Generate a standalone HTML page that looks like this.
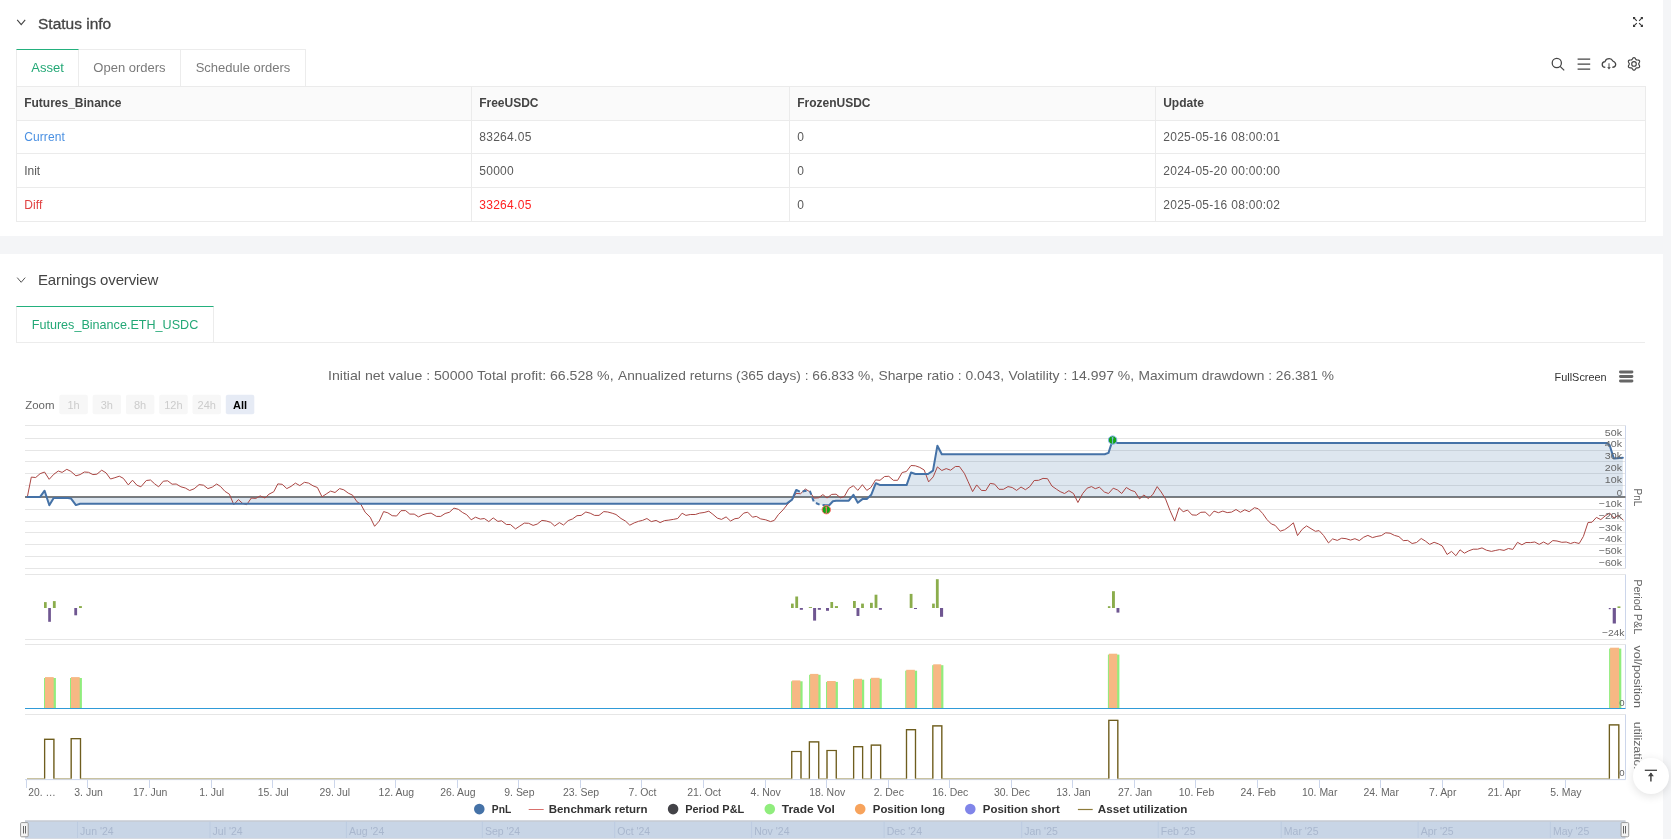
<!DOCTYPE html>
<html><head><meta charset="utf-8"><title>Backtest</title>
<style>
html,body{margin:0;padding:0}
body{width:1671px;height:839px;overflow:hidden;background:#f4f5f7;position:relative;font-family:'Liberation Sans',sans-serif;color:#595959}
.card{position:absolute;left:0;width:1663px;background:#fff}
.abs{position:absolute;white-space:nowrap;line-height:1}
.h1{font-size:15.5px;color:#444;-webkit-text-stroke:.3px #444}
.h2{font-size:15px;color:#444;letter-spacing:-.14px}
.tabs{position:absolute;left:16px;top:49px;height:37px;display:flex}
.tab{box-sizing:border-box;height:37px;border:1px solid #ececec;border-left:none;border-bottom:none;font-size:13px;color:#7a7a7a;line-height:35px;text-align:center}
.tab.first{border-left:1px solid #ececec}
.tab.on{border-top:1px solid #23b07d;color:#23a876;background:#fff}
table{position:absolute;left:16px;top:86px;width:1628.5px;border-collapse:collapse;table-layout:fixed;font-size:12px}
td,th{border:1px solid #ebebeb;padding:0 0 0 7.2px;text-align:left;height:33px;box-sizing:border-box;font-weight:400;color:#595959;white-space:nowrap}
th{background:#fafafa;font-weight:700;color:#444;height:34px;padding-bottom:2px}
tr.r1 td{height:33px}tr.r2 td{height:34px;padding-top:1px}tr.r3 td{height:34px;padding-top:1px}
td.n{letter-spacing:.3px}
svg text{font-family:'Liberation Sans',sans-serif}
.ax{font-size:9.6px;fill:#666}
.at{font-size:10.5px;fill:#666}
.xl{font-size:10px;fill:#666}
.lg{font-size:11.5px;font-weight:700;fill:#333}
.nv{font-size:10px;fill:#a9b7ce}
.tt{font-size:13px;fill:#666}
.zm{font-size:11.5px;fill:#666}
.zb{font-size:11px;fill:#ccc}
.zb.on{font-weight:700;fill:#000}
.fs{font-size:11px;fill:#333}
#gl{position:absolute;left:0;top:0;width:1671px;height:839px;will-change:transform}
</style></head><body>
<div class="card" style="top:0;height:236px"></div>
<div class="card" style="top:253.6px;height:585.4px"></div>

<div id="gl">
<svg class="abs" style="left:16px;top:18px" width="11" height="9" viewBox="0 0 11 9"><path d="M1.2 1.9L5.2 6.6L9.2 1.9" fill="none" stroke="#444" stroke-width="1.1"/></svg>
<div class="abs h1" style="left:38px;top:15.5px">Status info</div>
<svg class="abs" style="left:1632px;top:16px" width="12" height="12" viewBox="0 0 12 12"><g stroke="#333" stroke-width="1.1" fill="none"><path d="M4.8 4.8L1.7 1.7M7.1 4.8L10.2 1.7M4.8 7.1L1.7 10.2M7.1 7.1L10.2 10.2"/></g><g fill="#333"><path d="M1 1H3.6L1 3.6ZM10.9 1H8.3L10.9 3.6ZM1 10.9H3.6L1 8.3ZM10.9 10.9H8.3L10.9 8.3Z"/></g></svg>

<div class="tabs"><div class="tab first on" style="width:63px">Asset</div><div class="tab" style="width:102px">Open orders</div><div class="tab" style="width:125px">Schedule orders</div></div>

<svg class="abs" style="left:1548px;top:54px" width="98" height="20" viewBox="1548 54 98 20" fill="none" stroke="#444" stroke-width="1.25">
<circle cx="1556.8" cy="63" r="4.6"/><path d="M1560.1 66.4L1564.2 70.4"/>
<path d="M1577.6 59H1590.2M1577.6 64H1590.2M1577.6 69H1590.2"/>
<path d="M1605.3 67.4C1603.4 67.2 1602.2 65.9 1602.2 64.4C1602.2 62.9 1603.4 61.8 1605 61.6C1605.6 59.8 1607.3 58.7 1609.3 58.7C1611 58.7 1612.2 59.6 1612.8 61C1614.5 61.7 1615.7 62.8 1615.7 64.4C1615.7 66 1614.3 67.1 1612.3 67.4"/><path d="M1609 63.2V68" stroke="#888" stroke-width="1.5"/><path d="M1607.2 67.2H1610.8L1609 69.5Z" fill="#444" stroke="none"/>
<circle cx="1634" cy="63.9" r="2.3" stroke-width="1.1"/>
<path d="M1634.00 57.60 L1634.54 57.73 L1635.02 58.09 L1635.42 58.59 L1635.74 59.11 L1636.03 59.54 L1636.35 59.83 L1636.76 59.96 L1637.28 59.99 L1637.89 60.01 L1638.52 60.11 L1639.07 60.35 L1639.46 60.75 L1639.61 61.28 L1639.54 61.88 L1639.31 62.48 L1639.02 63.01 L1638.79 63.48 L1638.70 63.90 L1638.79 64.32 L1639.02 64.79 L1639.31 65.32 L1639.54 65.92 L1639.61 66.52 L1639.46 67.05 L1639.07 67.45 L1638.52 67.69 L1637.89 67.79 L1637.28 67.81 L1636.76 67.84 L1636.35 67.97 L1636.03 68.26 L1635.74 68.69 L1635.42 69.21 L1635.02 69.71 L1634.54 70.07 L1634.00 70.20 L1633.46 70.07 L1632.98 69.71 L1632.58 69.21 L1632.26 68.69 L1631.97 68.26 L1631.65 67.97 L1631.24 67.84 L1630.72 67.81 L1630.11 67.79 L1629.48 67.69 L1628.93 67.45 L1628.54 67.05 L1628.39 66.52 L1628.46 65.92 L1628.69 65.32 L1628.98 64.79 L1629.21 64.32 L1629.30 63.90 L1629.21 63.48 L1628.98 63.01 L1628.69 62.48 L1628.46 61.88 L1628.39 61.28 L1628.54 60.75 L1628.93 60.35 L1629.48 60.11 L1630.11 60.01 L1630.72 59.99 L1631.24 59.96 L1631.65 59.83 L1631.97 59.54 L1632.26 59.11 L1632.58 58.59 L1632.98 58.09 L1633.46 57.73Z" stroke-linejoin="round" stroke-width="1.2"/>
</svg>

<table><colgroup><col style="width:455px"><col style="width:318px"><col style="width:366px"><col style="width:489.5px"></colgroup>
<tr><th>Futures_Binance</th><th>FreeUSDC</th><th>FrozenUSDC</th><th>Update</th></tr>
<tr class="r1"><td style="color:#4a90e2;letter-spacing:.1px">Current</td><td class="n">83264.05</td><td class="n">0</td><td class="n">2025-05-16 08:00:01</td></tr>
<tr class="r2"><td>Init</td><td class="n">50000</td><td class="n">0</td><td class="n">2024-05-20 00:00:00</td></tr>
<tr class="r3"><td style="color:#e04040;letter-spacing:.15px">Diff</td><td class="n" style="color:#ff1f1f">33264.05</td><td class="n">0</td><td class="n">2025-05-16 08:00:02</td></tr>
</table>

<svg class="abs" style="left:16px;top:276px" width="11" height="9" viewBox="0 0 11 9"><path d="M1.2 1.6L5.2 6.3L9.2 1.6" fill="none" stroke="#555" stroke-width="1"/></svg>
<div class="abs h2" style="left:38px;top:271.5px">Earnings overview</div>
<div class="abs" style="left:16px;top:306px;width:198px;height:37px;box-sizing:border-box;border:1px solid #ececec;border-top:1px solid #23b07d;border-bottom:none;font-size:12.6px;color:#23a876;line-height:37px;text-align:center">Futures_Binance.ETH_USDC</div>
<div class="abs" style="left:16px;top:342px;width:1629px;height:1px;background:#ececec"></div>

<svg class="abs" style="left:0;top:0" width="1671" height="839" viewBox="0 0 1671 839">
<path d="M25 568.5H1625.5" stroke="#e6e6e6" stroke-width="1"/>
<path d="M25 556.5H1625.5" stroke="#e6e6e6" stroke-width="1"/>
<path d="M25 544.5H1625.5" stroke="#e6e6e6" stroke-width="1"/>
<path d="M25 532.5H1625.5" stroke="#e6e6e6" stroke-width="1"/>
<path d="M25 521.5H1625.5" stroke="#e6e6e6" stroke-width="1"/>
<path d="M25 509.5H1625.5" stroke="#e6e6e6" stroke-width="1"/>
<path d="M25 485.5H1625.5" stroke="#e6e6e6" stroke-width="1"/>
<path d="M25 473.5H1625.5" stroke="#e6e6e6" stroke-width="1"/>
<path d="M25 461.5H1625.5" stroke="#e6e6e6" stroke-width="1"/>
<path d="M25 450.5H1625.5" stroke="#e6e6e6" stroke-width="1"/>
<path d="M25 438.5H1625.5" stroke="#e6e6e6" stroke-width="1"/>
<path d="M25 425.5H1625.5" stroke="#e6e6e6" stroke-width="1"/>
<path d="M25 574.5H1625.5" stroke="#e6e6e6" stroke-width="1"/>
<path d="M25 639.5H1625.5" stroke="#e6e6e6" stroke-width="1"/>
<path d="M25 644.5H1625.5" stroke="#e6e6e6" stroke-width="1"/>
<path d="M25 714.5H1625.5" stroke="#e6e6e6" stroke-width="1"/>
<path d="M1625.5 425.5V568.5" stroke="#ccd6eb" stroke-width="1"/>
<path d="M1625.5 574.5V639.5" stroke="#ccd6eb" stroke-width="1"/>
<path d="M1625.5 644.5V708.5" stroke="#ccd6eb" stroke-width="1"/>
<path d="M1625.5 714.5V779.5" stroke="#ccd6eb" stroke-width="1"/>
<path d="M25 497H1625.5" stroke="#7d7d7d" stroke-width="2"/>
<path d="M27.4 497 L27.4,496.9 40.1,496.9 44.6,490.7 49.3,505.3 53.7,497.9 67.8,497.9 70.9,498.4 75.9,505.1 80.1,503.7 786.4,503.7 792.1,499.6 796.2,490.0 800.9,492.1 805.3,490.8 810.1,491.5 812.8,499.0 814.1,502.2 819.7,504.7 824.8,505.3 829.2,505.3 832.9,501.3 836.1,500.7 848.8,500.7 853.4,494.8 857.8,502.7 862.4,499.1 866.8,499.1 871.2,494.8 875.8,483.2 880.2,485.1 906.6,485.1 911.0,472.5 915.4,474.0 928.0,474.0 933.0,470.6 937.4,445.7 941.8,454.3 1104.7,454.3 1108.5,452.9 1111.0,445.1 1112.9,441.1 1117.3,442.9 1606.3,442.9 1609.5,444.8 1613.8,458.4 1622.8,457.7 L1622.8 497 Z" fill="#4572A7" fill-opacity="0.18"/>
<polyline points="27.3,497.2 31.3,477.1 35.7,477.5 40.1,473.7 44.5,472.0 49.2,479.3 53.9,474.2 58.3,471.0 62.1,472.4 66.8,469.3 70.9,471.4 75.9,475.8 80.1,474.6 84.3,472.0 88.5,472.3 92.9,474.6 96.9,474.2 101.7,470.2 106.1,472.9 110.5,479.0 114.9,477.7 119.3,476.2 123.3,478.3 128.3,484.9 132.5,480.2 136.9,485.2 140.9,486.8 146.3,480.5 150.5,480.0 154.5,483.7 158.6,486.8 163.3,481.2 167.7,480.8 172.1,484.2 176.2,484.0 180.9,486.8 185.3,488.0 189.7,490.5 194.1,488.8 199.1,484.6 203.5,485.2 207.9,488.6 212.3,487.1 216.7,484.0 220.5,486.5 224.9,491.3 229.4,494.2 233.8,504.7 238.4,499.6 242.6,503.4 246.6,504.7 251.4,498.0 255.8,498.4 260.2,495.9 265.0,498.0 269.0,494.2 273.8,491.7 277.8,483.9 282.2,484.3 286.8,488.6 291.0,486.4 295.4,483.1 299.8,485.6 304.4,482.3 308.6,483.1 313.0,485.8 317.4,487.5 322.0,496.8 326.2,494.0 330.6,491.1 335.0,492.5 339.6,488.6 343.8,489.8 348.2,493.1 352.6,495.2 357.0,501.8 360.7,504.0 365.1,512.2 370.2,517.2 374.6,526.3 379.3,521.0 383.6,511.6 387.8,512.8 392.2,515.7 396.6,516.0 401.0,510.7 405.6,510.6 409.8,514.1 414.2,514.1 418.5,516.9 422.9,514.7 427.1,513.5 431.1,513.1 436.5,516.4 440.7,516.4 445.1,513.5 449.5,512.2 453.9,508.1 458.3,509.3 462.7,512.6 466.7,514.7 471.2,519.8 475.5,517.2 480.3,519.1 484.3,518.5 488.8,521.6 493.2,517.9 497.9,521.4 501.6,520.8 506.4,524.5 510.4,524.5 515.5,528.9 519.9,526.0 524.3,523.1 528.7,523.3 533.1,525.4 537.2,524.1 541.9,520.4 546.3,521.0 550.6,522.3 554.7,526.0 559.4,522.6 563.5,525.0 568.2,520.6 572.6,518.9 577.0,515.7 581.2,515.4 585.8,512.0 590.2,513.2 594.6,515.4 599.0,515.4 603.8,511.6 607.8,512.0 612.2,513.2 616.0,514.5 621.0,518.5 625.4,521.0 629.8,525.2 634.2,522.9 638.6,521.3 642.5,520.4 646.9,518.5 651.3,521.6 656.1,520.4 660.1,522.6 664.5,520.6 668.9,520.1 673.3,519.4 677.7,518.5 682.1,513.2 685.9,515.4 690.3,514.5 695.3,514.5 699.7,513.1 704.1,512.5 708.8,511.2 712.9,514.3 717.3,518.1 721.5,519.4 726.1,516.9 730.5,521.0 734.9,518.7 738.7,518.2 743.7,513.1 747.7,512.2 752.5,517.2 756.3,516.4 760.7,518.9 765.7,519.8 770.5,521.6 774.3,520.4 778.3,514.7 783.0,509.9 787.7,504.0 792.1,500.0 795.9,493.4 800.6,493.7 805.3,489.0 809.7,491.7 814.1,498.1 818.5,497.8 822.9,494.6 827.0,498.0 831.7,494.4 836.1,494.2 840.5,497.8 844.4,496.4 848.8,488.5 853.4,485.7 857.8,490.4 862.4,484.7 866.8,490.4 870.8,487.6 875.6,479.9 880.0,480.3 884.6,476.5 888.8,476.3 893.4,480.3 897.6,480.3 902.2,472.5 906.4,471.5 911.0,465.5 915.4,465.8 919.8,467.4 924.2,470.0 928.6,481.9 933.2,476.9 937.4,466.9 941.8,470.5 946.2,468.6 950.6,470.2 955.4,466.5 959.4,466.5 964.4,473.4 968.2,481.8 972.6,491.6 976.7,484.9 981.4,490.4 985.8,490.6 990.2,483.4 994.6,484.1 999.0,489.3 1003.4,489.3 1008.0,486.6 1012.2,487.5 1016.6,490.4 1021.0,487.0 1025.4,489.7 1029.8,486.6 1034.2,480.5 1038.6,480.3 1043.0,478.4 1047.5,478.7 1051.9,486.0 1056.3,489.1 1060.1,491.6 1064.5,493.5 1068.9,490.7 1073.5,493.5 1077.9,502.5 1082.7,493.5 1087.1,488.2 1091.5,486.6 1095.3,488.7 1099.4,487.2 1104.4,492.0 1108.5,493.5 1113.2,488.2 1117.6,490.0 1121.7,493.5 1126.3,487.5 1131.1,490.4 1134.9,491.6 1139.5,498.9 1143.9,495.0 1148.3,498.5 1152.8,494.5 1157.2,486.6 1161.2,492.0 1165.6,499.1 1170.0,510.5 1174.7,521.1 1179.1,507.7 1183.2,511.7 1187.6,510.1 1192.0,514.9 1196.4,515.2 1200.8,512.3 1205.2,512.1 1209.6,516.1 1214.0,511.1 1218.4,512.7 1222.8,511.1 1227.2,512.6 1231.6,512.1 1236.0,509.5 1240.4,512.3 1244.8,509.8 1249.2,511.7 1254.4,507.7 1258.2,508.7 1262.6,513.4 1267.0,519.6 1271.4,524.0 1275.1,525.3 1280.2,531.2 1284.6,529.7 1289.0,526.6 1293.4,522.8 1297.5,535.6 1302.2,529.3 1306.6,525.9 1311.0,528.7 1315.4,531.3 1319.1,530.6 1323.5,535.4 1328.5,542.9 1332.6,538.9 1337.3,540.4 1341.7,538.2 1346.1,538.7 1350.5,540.1 1354.9,538.7 1359.3,540.6 1363.7,537.2 1367.9,535.4 1372.5,537.6 1376.9,536.4 1381.3,535.6 1385.7,532.8 1390.1,533.2 1394.5,535.4 1398.9,536.6 1403.3,540.6 1407.7,540.4 1412.1,543.5 1416.5,542.5 1421.2,538.5 1425.3,541.0 1429.7,544.4 1434.1,542.3 1438.5,543.9 1442.3,546.0 1447.1,554.5 1451.5,551.4 1455.9,555.7 1460.0,549.8 1464.4,553.2 1468.8,550.8 1473.2,549.2 1477.6,549.2 1482.0,547.9 1486.4,550.2 1491.4,551.4 1495.8,550.4 1499.6,549.6 1504.0,550.4 1508.4,548.5 1512.8,549.4 1517.5,542.3 1521.9,544.8 1526.0,542.5 1530.4,542.6 1534.8,542.0 1539.2,544.4 1543.6,542.0 1548.0,544.4 1552.8,540.6 1557.0,541.0 1561.8,542.3 1566.2,542.0 1570.6,543.5 1574.4,542.3 1579.2,543.5 1583.4,536.4 1588.0,522.5 1592.0,522.2 1596.4,517.4 1600.8,519.6 1605.2,515.9 1609.6,513.1 1614.0,518.0 1618.4,515.2 1623.4,520.3" fill="none" stroke="#AA4643" stroke-width="1" stroke-linejoin="round"/>
<polyline points="27.4,496.9 40.1,496.9 44.6,490.7 49.3,505.3 53.7,497.9 67.8,497.9 70.9,498.4 75.9,505.1 80.1,503.7 786.4,503.7 792.1,499.6 796.2,490.0" fill="none" stroke="#4572A7" stroke-width="2" stroke-linejoin="round" stroke-linecap="round"/>
<polyline points="796.2,490.0 800.9,492.1 805.3,490.8 810.1,491.5 812.8,499.0 814.1,502.2 819.7,504.7 824.8,505.3" fill="none" stroke="#4572A7" stroke-width="2" stroke-dasharray="4 3" stroke-linejoin="round"/>
<polyline points="824.8,505.3 829.2,505.3 832.9,501.3 836.1,500.7 848.8,500.7 853.4,494.8 857.8,502.7 862.4,499.1 866.8,499.1 871.2,494.8 875.8,483.2 880.2,485.1 906.6,485.1 911.0,472.5 915.4,474.0 928.0,474.0 933.0,470.6 937.4,445.7 941.8,454.3 1104.7,454.3 1108.5,452.9 1111.0,445.1 1112.9,441.1 1117.3,442.9 1606.3,442.9 1609.5,444.8 1613.8,458.4 1622.8,457.7" fill="none" stroke="#4572A7" stroke-width="2" stroke-linejoin="round" stroke-linecap="round"/>
<circle cx="826.3" cy="509.7" r="4.2" fill="#14a514" stroke="#ff7070" stroke-width="1"/>
<path d="M826.3 507.5V513.3" stroke="#ff7070" stroke-width="1"/><circle cx="826.3" cy="507.5" r="0.9" fill="#ff7070"/>
<circle cx="1112.6" cy="440.1" r="4.2" fill="#14a514" stroke="#7fb0e8" stroke-width="1"/>
<path d="M1112.6 437.90000000000003V443.70000000000005" stroke="#7fb0e8" stroke-width="1"/><circle cx="1112.6" cy="437.90000000000003" r="0.9" fill="#7fb0e8"/>
<rect x="44.0" y="602.1" width="2.7" height="5.9" fill="#8bad4c"/>
<rect x="48.2" y="608.0" width="2.7" height="13.8" fill="#6f5691"/>
<rect x="52.9" y="601.1" width="2.8" height="6.9" fill="#8bad4c"/>
<rect x="74.3" y="608.0" width="2.8" height="7.3" fill="#6f5691"/>
<rect x="79.0" y="606.1" width="2.9" height="1.9" fill="#8bad4c"/>
<rect x="791.0" y="603.6" width="2.7" height="4.4" fill="#8bad4c"/>
<rect x="795.3" y="596.5" width="2.8" height="11.5" fill="#8bad4c"/>
<rect x="799.8" y="608.0" width="3.1" height="1.8" fill="#6f5691"/>
<rect x="808.8" y="607.1" width="3.2" height="0.9" fill="#8bad4c"/>
<rect x="813.1" y="608.0" width="3.0" height="12.6" fill="#6f5691"/>
<rect x="817.8" y="608.0" width="3.1" height="1.8" fill="#6f5691"/>
<rect x="826.0" y="608.0" width="3.0" height="2.8" fill="#6f5691"/>
<rect x="830.4" y="602.0" width="2.7" height="6.0" fill="#8bad4c"/>
<rect x="834.9" y="606.1" width="3.1" height="1.9" fill="#8bad4c"/>
<rect x="853.0" y="601.0" width="2.8" height="7.0" fill="#8bad4c"/>
<rect x="856.5" y="608.0" width="2.9" height="8.0" fill="#6f5691"/>
<rect x="861.1" y="603.6" width="2.8" height="4.4" fill="#8bad4c"/>
<rect x="870.0" y="602.8" width="2.8" height="5.2" fill="#8bad4c"/>
<rect x="874.6" y="594.7" width="2.8" height="13.2" fill="#8bad4c"/>
<rect x="878.9" y="608.0" width="3.0" height="1.8" fill="#6f5691"/>
<rect x="909.7" y="593.9" width="2.8" height="14.1" fill="#8bad4c"/>
<rect x="914.0" y="608.0" width="3.0" height="1.0" fill="#6f5691"/>
<rect x="932.1" y="603.6" width="2.7" height="4.4" fill="#8bad4c"/>
<rect x="935.9" y="579.2" width="2.8" height="28.8" fill="#8bad4c"/>
<rect x="940.0" y="608.0" width="3.1" height="8.8" fill="#6f5691"/>
<rect x="1107.9" y="606.2" width="2.5" height="1.8" fill="#8bad4c"/>
<rect x="1112.0" y="591.2" width="2.9" height="16.8" fill="#8bad4c"/>
<rect x="1116.5" y="608.0" width="2.9" height="4.6" fill="#6f5691"/>
<rect x="1608.8" y="608.0" width="1.9" height="1.2" fill="#6f5691"/>
<rect x="1612.7" y="608.0" width="3.2" height="15.5" fill="#6f5691"/>
<rect x="1617.5" y="606.4" width="2.9" height="1.6" fill="#8bad4c"/>
<rect x="44.0" y="678.0" width="11.9" height="30.5" fill="#90ed7d"/>
<rect x="45.0" y="677.1" width="8.7" height="31.4" fill="#f7b884"/>
<rect x="70.0" y="678.0" width="11.9" height="30.5" fill="#90ed7d"/>
<rect x="71.0" y="677.1" width="8.7" height="31.4" fill="#f7b884"/>
<rect x="791.1" y="681.3" width="11.5" height="27.2" fill="#90ed7d"/>
<rect x="792.1" y="680.4" width="8.3" height="28.1" fill="#f7b884"/>
<rect x="809.1" y="674.8" width="11.5" height="33.7" fill="#90ed7d"/>
<rect x="810.1" y="673.9" width="8.3" height="34.6" fill="#f7b884"/>
<rect x="826.0" y="681.9" width="11.9" height="26.6" fill="#90ed7d"/>
<rect x="827.0" y="681.0" width="8.7" height="27.5" fill="#f7b884"/>
<rect x="853.0" y="679.7" width="11.2" height="28.8" fill="#90ed7d"/>
<rect x="854.0" y="678.8" width="8.0" height="29.7" fill="#f7b884"/>
<rect x="870.0" y="678.7" width="11.8" height="29.8" fill="#90ed7d"/>
<rect x="871.0" y="677.8" width="8.6" height="30.7" fill="#f7b884"/>
<rect x="905.2" y="670.7" width="11.9" height="37.8" fill="#90ed7d"/>
<rect x="906.2" y="669.8" width="8.7" height="38.7" fill="#f7b884"/>
<rect x="932.2" y="665.2" width="11.2" height="43.3" fill="#90ed7d"/>
<rect x="933.2" y="664.3" width="8.0" height="44.2" fill="#f7b884"/>
<rect x="1107.9" y="654.6" width="11.5" height="53.9" fill="#90ed7d"/>
<rect x="1108.9" y="653.7" width="8.3" height="54.8" fill="#f7b884"/>
<rect x="1609.1" y="648.6" width="12.2" height="59.9" fill="#90ed7d"/>
<rect x="1610.1" y="647.7" width="9.0" height="60.8" fill="#f7b884"/>
<path d="M25 708.5H1625.5" stroke="#2f9bd8" stroke-width="1.2"/>
<path d="M25 779.6H1625.5" stroke="#ccd6eb" stroke-width="1"/>
<path d="M27 778.6H44.6V739.3H53.9V778.6H71.2V738.6H80.5V778.6H791.7V751.5H801.0V778.6H809.4V741.9H818.7V778.6H827.0V750.5H836.3V778.6H853.6V746.7H862.6V778.6H871.3V745.1H880.6V778.6H906.5V729.7H915.5V778.6H932.8V725.8H941.8V778.6H1108.8V720.4H1117.8V778.6H1609.4V724.9H1618.8V778.6" fill="none" stroke="#c9c2a0" stroke-width="1.4"/>
<path d="M44.6 778.6V739.3H53.9V778.6" fill="none" stroke="#6e5d1f" stroke-width="1.2"/>
<path d="M71.2 778.6V738.6H80.5V778.6" fill="none" stroke="#6e5d1f" stroke-width="1.2"/>
<path d="M791.7 778.6V751.5H801.0V778.6" fill="none" stroke="#6e5d1f" stroke-width="1.2"/>
<path d="M809.4 778.6V741.9H818.7V778.6" fill="none" stroke="#6e5d1f" stroke-width="1.2"/>
<path d="M827.0 778.6V750.5H836.3V778.6" fill="none" stroke="#6e5d1f" stroke-width="1.2"/>
<path d="M853.6 778.6V746.7H862.6V778.6" fill="none" stroke="#6e5d1f" stroke-width="1.2"/>
<path d="M871.3 778.6V745.1H880.6V778.6" fill="none" stroke="#6e5d1f" stroke-width="1.2"/>
<path d="M906.5 778.6V729.7H915.5V778.6" fill="none" stroke="#6e5d1f" stroke-width="1.2"/>
<path d="M932.8 778.6V725.8H941.8V778.6" fill="none" stroke="#6e5d1f" stroke-width="1.2"/>
<path d="M1108.8 778.6V720.4H1117.8V778.6" fill="none" stroke="#6e5d1f" stroke-width="1.2"/>
<path d="M1609.4 778.6V724.9H1618.8V778.6" fill="none" stroke="#6e5d1f" stroke-width="1.2"/>
<text x="1622" y="435.5" text-anchor="end" class="ax" textLength="17.2" lengthAdjust="spacingAndGlyphs">50k</text>
<text x="1622" y="447.4" text-anchor="end" class="ax" textLength="17.2" lengthAdjust="spacingAndGlyphs">40k</text>
<text x="1622" y="459.3" text-anchor="end" class="ax" textLength="17.2" lengthAdjust="spacingAndGlyphs">30k</text>
<text x="1622" y="471.1" text-anchor="end" class="ax" textLength="17.2" lengthAdjust="spacingAndGlyphs">20k</text>
<text x="1622" y="483.0" text-anchor="end" class="ax" textLength="17.2" lengthAdjust="spacingAndGlyphs">10k</text>
<text x="1622" y="495.7" text-anchor="end" class="ax">0</text>
<text x="1622" y="506.8" text-anchor="end" class="ax" textLength="23.2" lengthAdjust="spacingAndGlyphs">−10k</text>
<text x="1622" y="518.7" text-anchor="end" class="ax" textLength="23.2" lengthAdjust="spacingAndGlyphs">−20k</text>
<text x="1622" y="530.5" text-anchor="end" class="ax" textLength="23.2" lengthAdjust="spacingAndGlyphs">−30k</text>
<text x="1622" y="542.4" text-anchor="end" class="ax" textLength="23.2" lengthAdjust="spacingAndGlyphs">−40k</text>
<text x="1622" y="554.3" text-anchor="end" class="ax" textLength="23.2" lengthAdjust="spacingAndGlyphs">−50k</text>
<text x="1622" y="566.2" text-anchor="end" class="ax" textLength="23.2" lengthAdjust="spacingAndGlyphs">−60k</text>
<text x="1624.5" y="635.8" text-anchor="end" class="ax" textLength="22.6" lengthAdjust="spacingAndGlyphs">−24k</text>
<text x="1624.5" y="706.4" text-anchor="end" class="ax">0</text>
<text x="1624.5" y="776.2" text-anchor="end" class="ax">0</text>
<text transform="translate(1633.6 497.4) rotate(90)" text-anchor="middle" class="at" textLength="17.6" lengthAdjust="spacingAndGlyphs">PnL</text>
<text transform="translate(1633.6 606.8) rotate(90)" text-anchor="middle" class="at" textLength="55" lengthAdjust="spacingAndGlyphs">Period P&amp;L</text>
<text transform="translate(1633.6 676.7) rotate(90)" text-anchor="middle" class="at" textLength="62.5" lengthAdjust="spacingAndGlyphs">vol/position</text>
<text transform="translate(1633.6 747.4) rotate(90)" text-anchor="middle" class="at" textLength="51.5" lengthAdjust="spacingAndGlyphs">utilizatio..</text>
<path d="M26.5 780V788" stroke="#ccd6eb" stroke-width="1"/>
<text x="28.3" y="796.3" class="xl" textLength="27.4" lengthAdjust="spacingAndGlyphs">20. …</text>
<path d="M87.5 780V788" stroke="#ccd6eb" stroke-width="1"/>
<text x="74.3" y="796.3" class="xl" textLength="28.5" lengthAdjust="spacingAndGlyphs">3. Jun</text>
<path d="M149.5 780V788" stroke="#ccd6eb" stroke-width="1"/>
<text x="133.0" y="796.3" class="xl" textLength="34.3" lengthAdjust="spacingAndGlyphs">17. Jun</text>
<path d="M211.5 780V788" stroke="#ccd6eb" stroke-width="1"/>
<text x="199.2" y="796.3" class="xl" textLength="25.0" lengthAdjust="spacingAndGlyphs">1. Jul</text>
<path d="M272.5 780V788" stroke="#ccd6eb" stroke-width="1"/>
<text x="257.8" y="796.3" class="xl" textLength="30.8" lengthAdjust="spacingAndGlyphs">15. Jul</text>
<path d="M334.5 780V788" stroke="#ccd6eb" stroke-width="1"/>
<text x="319.4" y="796.3" class="xl" textLength="30.8" lengthAdjust="spacingAndGlyphs">29. Jul</text>
<path d="M395.5 780V788" stroke="#ccd6eb" stroke-width="1"/>
<text x="378.6" y="796.3" class="xl" textLength="35.4" lengthAdjust="spacingAndGlyphs">12. Aug</text>
<path d="M457.5 780V788" stroke="#ccd6eb" stroke-width="1"/>
<text x="440.2" y="796.3" class="xl" textLength="35.4" lengthAdjust="spacingAndGlyphs">26. Aug</text>
<path d="M518.5 780V788" stroke="#ccd6eb" stroke-width="1"/>
<text x="504.3" y="796.3" class="xl" textLength="30.2" lengthAdjust="spacingAndGlyphs">9. Sep</text>
<path d="M580.5 780V788" stroke="#ccd6eb" stroke-width="1"/>
<text x="563.0" y="796.3" class="xl" textLength="36.0" lengthAdjust="spacingAndGlyphs">23. Sep</text>
<path d="M641.5 780V788" stroke="#ccd6eb" stroke-width="1"/>
<text x="628.6" y="796.3" class="xl" textLength="27.9" lengthAdjust="spacingAndGlyphs">7. Oct</text>
<path d="M703.5 780V788" stroke="#ccd6eb" stroke-width="1"/>
<text x="687.3" y="796.3" class="xl" textLength="33.7" lengthAdjust="spacingAndGlyphs">21. Oct</text>
<path d="M765.5 780V788" stroke="#ccd6eb" stroke-width="1"/>
<text x="750.6" y="796.3" class="xl" textLength="30.2" lengthAdjust="spacingAndGlyphs">4. Nov</text>
<path d="M826.5 780V788" stroke="#ccd6eb" stroke-width="1"/>
<text x="809.2" y="796.3" class="xl" textLength="36.0" lengthAdjust="spacingAndGlyphs">18. Nov</text>
<path d="M888.5 780V788" stroke="#ccd6eb" stroke-width="1"/>
<text x="873.7" y="796.3" class="xl" textLength="30.2" lengthAdjust="spacingAndGlyphs">2. Dec</text>
<path d="M949.5 780V788" stroke="#ccd6eb" stroke-width="1"/>
<text x="932.3" y="796.3" class="xl" textLength="36.0" lengthAdjust="spacingAndGlyphs">16. Dec</text>
<path d="M1011.5 780V788" stroke="#ccd6eb" stroke-width="1"/>
<text x="993.9" y="796.3" class="xl" textLength="36.0" lengthAdjust="spacingAndGlyphs">30. Dec</text>
<path d="M1072.5 780V788" stroke="#ccd6eb" stroke-width="1"/>
<text x="1056.3" y="796.3" class="xl" textLength="34.3" lengthAdjust="spacingAndGlyphs">13. Jan</text>
<path d="M1134.5 780V788" stroke="#ccd6eb" stroke-width="1"/>
<text x="1117.9" y="796.3" class="xl" textLength="34.3" lengthAdjust="spacingAndGlyphs">27. Jan</text>
<path d="M1195.5 780V788" stroke="#ccd6eb" stroke-width="1"/>
<text x="1178.8" y="796.3" class="xl" textLength="35.4" lengthAdjust="spacingAndGlyphs">10. Feb</text>
<path d="M1257.5 780V788" stroke="#ccd6eb" stroke-width="1"/>
<text x="1240.4" y="796.3" class="xl" textLength="35.4" lengthAdjust="spacingAndGlyphs">24. Feb</text>
<path d="M1319.5 780V788" stroke="#ccd6eb" stroke-width="1"/>
<text x="1302.0" y="796.3" class="xl" textLength="35.4" lengthAdjust="spacingAndGlyphs">10. Mar</text>
<path d="M1380.5 780V788" stroke="#ccd6eb" stroke-width="1"/>
<text x="1363.5" y="796.3" class="xl" textLength="35.4" lengthAdjust="spacingAndGlyphs">24. Mar</text>
<path d="M1442.5 780V788" stroke="#ccd6eb" stroke-width="1"/>
<text x="1429.1" y="796.3" class="xl" textLength="27.3" lengthAdjust="spacingAndGlyphs">7. Apr</text>
<path d="M1503.5 780V788" stroke="#ccd6eb" stroke-width="1"/>
<text x="1487.8" y="796.3" class="xl" textLength="33.1" lengthAdjust="spacingAndGlyphs">21. Apr</text>
<path d="M1565.5 780V788" stroke="#ccd6eb" stroke-width="1"/>
<text x="1550.2" y="796.3" class="xl" textLength="31.4" lengthAdjust="spacingAndGlyphs">5. May</text>
<circle cx="479.3" cy="809.1" r="5.3" fill="#4572A7"/>
<text x="491.8" y="813" class="lg" textLength="19.4" lengthAdjust="spacingAndGlyphs">PnL</text>
<path d="M528.7 809.5H543.7" stroke="#d9706c" stroke-width="1"/>
<text x="548.7" y="813" class="lg" textLength="98.9" lengthAdjust="spacingAndGlyphs">Benchmark return</text>
<circle cx="673.1" cy="809.1" r="5.3" fill="#434348"/>
<text x="685.2" y="813" class="lg" textLength="59.1" lengthAdjust="spacingAndGlyphs">Period P&amp;L</text>
<circle cx="769.8" cy="809.1" r="5.3" fill="#90ed7d"/>
<text x="781.8" y="813" class="lg" textLength="53" lengthAdjust="spacingAndGlyphs">Trade Vol</text>
<circle cx="860.2" cy="809.1" r="5.3" fill="#f7a35c"/>
<text x="872.8" y="813" class="lg" textLength="72.1" lengthAdjust="spacingAndGlyphs">Position long</text>
<circle cx="970.3" cy="809.1" r="5.3" fill="#8085e9"/>
<text x="982.8" y="813" class="lg" textLength="76.9" lengthAdjust="spacingAndGlyphs">Position short</text>
<path d="M1077.9 809.5H1092.7" stroke="#8d7b3a" stroke-width="1.2"/>
<text x="1097.7" y="813" class="lg" textLength="89.8" lengthAdjust="spacingAndGlyphs">Asset utilization</text>
<rect x="25" y="821" width="1600.5" height="17" fill="#c8d5e6"/>
<path d="M25 821H1625.5" stroke="#c6cad2" stroke-width="1.4"/>
<path d="M25 838.5H1625.5" stroke="#d6dae2" stroke-width="1"/>
<path d="M77.5 821.5V838" stroke="#bccbe0" stroke-width="1"/>
<text x="80.1" y="834.9" class="nv" textLength="33.5" lengthAdjust="spacingAndGlyphs">Jun '24</text>
<path d="M210.0 821.5V838" stroke="#bccbe0" stroke-width="1"/>
<text x="212.6" y="834.9" class="nv" textLength="30.0" lengthAdjust="spacingAndGlyphs">Jul '24</text>
<path d="M346.4 821.5V838" stroke="#bccbe0" stroke-width="1"/>
<text x="349.0" y="834.9" class="nv" textLength="35.3" lengthAdjust="spacingAndGlyphs">Aug '24</text>
<path d="M482.3 821.5V838" stroke="#bccbe0" stroke-width="1"/>
<text x="484.9" y="834.9" class="nv" textLength="35.3" lengthAdjust="spacingAndGlyphs">Sep '24</text>
<path d="M614.7 821.5V838" stroke="#bccbe0" stroke-width="1"/>
<text x="617.3" y="834.9" class="nv" textLength="32.9" lengthAdjust="spacingAndGlyphs">Oct '24</text>
<path d="M751.6 821.5V838" stroke="#bccbe0" stroke-width="1"/>
<text x="754.2" y="834.9" class="nv" textLength="35.3" lengthAdjust="spacingAndGlyphs">Nov '24</text>
<path d="M884.1 821.5V838" stroke="#bccbe0" stroke-width="1"/>
<text x="886.7" y="834.9" class="nv" textLength="35.3" lengthAdjust="spacingAndGlyphs">Dec '24</text>
<path d="M1021.7 821.5V838" stroke="#bccbe0" stroke-width="1"/>
<text x="1024.3" y="834.9" class="nv" textLength="33.5" lengthAdjust="spacingAndGlyphs">Jan '25</text>
<path d="M1158.2 821.5V838" stroke="#bccbe0" stroke-width="1"/>
<text x="1160.8" y="834.9" class="nv" textLength="34.7" lengthAdjust="spacingAndGlyphs">Feb '25</text>
<path d="M1281.2 821.5V838" stroke="#bccbe0" stroke-width="1"/>
<text x="1283.8" y="834.9" class="nv" textLength="34.7" lengthAdjust="spacingAndGlyphs">Mar '25</text>
<path d="M1418.1 821.5V838" stroke="#bccbe0" stroke-width="1"/>
<text x="1420.7" y="834.9" class="nv" textLength="32.9" lengthAdjust="spacingAndGlyphs">Apr '25</text>
<path d="M1550.3 821.5V838" stroke="#bccbe0" stroke-width="1"/>
<text x="1552.9" y="834.9" class="nv" textLength="36.4" lengthAdjust="spacingAndGlyphs">May '25</text>
<rect x="20.6" y="822.6" width="7.6" height="14.2" rx="1" fill="#f4f4f4" stroke="#9a9a9a" stroke-width="1"/>
<path d="M23.5 826V833.5M25.5 826V833.5" stroke="#555" stroke-width="0.9"/>
<rect x="1621.1" y="822.6" width="7.6" height="14.2" rx="1" fill="#f4f4f4" stroke="#9a9a9a" stroke-width="1"/>
<path d="M1623.5 826V833.5M1625.5 826V833.5" stroke="#555" stroke-width="0.9"/>
<text x="328" y="380" class="tt" textLength="285.6" lengthAdjust="spacingAndGlyphs">Initial net value : 50000 Total profit: 66.528 %,</text>
<text x="618" y="380" class="tt" textLength="256" lengthAdjust="spacingAndGlyphs">Annualized returns (365 days) : 66.833 %,</text>
<text x="878.4" y="380" class="tt" textLength="125.6" lengthAdjust="spacingAndGlyphs">Sharpe ratio : 0.043,</text>
<text x="1008.4" y="380" class="tt" textLength="125.7" lengthAdjust="spacingAndGlyphs">Volatility : 14.997 %,</text>
<text x="1138.5" y="380" class="tt" textLength="195.4" lengthAdjust="spacingAndGlyphs">Maximum drawdown : 26.381 %</text>
<text x="25.2" y="409.1" class="zm" textLength="29.3" lengthAdjust="spacingAndGlyphs">Zoom</text>
<rect x="59.3" y="394.8" width="28.5" height="19.5" rx="2" fill="#f7f7f7"/>
<text x="73.5" y="409.1" text-anchor="middle" class="zb">1h</text>
<rect x="92.6" y="394.8" width="28.5" height="19.5" rx="2" fill="#f7f7f7"/>
<text x="106.8" y="409.1" text-anchor="middle" class="zb">3h</text>
<rect x="125.9" y="394.8" width="28.5" height="19.5" rx="2" fill="#f7f7f7"/>
<text x="140.1" y="409.1" text-anchor="middle" class="zb">8h</text>
<rect x="159.2" y="394.8" width="28.5" height="19.5" rx="2" fill="#f7f7f7"/>
<text x="173.4" y="409.1" text-anchor="middle" class="zb">12h</text>
<rect x="192.5" y="394.8" width="28.5" height="19.5" rx="2" fill="#f7f7f7"/>
<text x="206.8" y="409.1" text-anchor="middle" class="zb">24h</text>
<rect x="225.8" y="394.8" width="28.5" height="19.5" rx="2" fill="#e6ebf5"/>
<text x="240.1" y="409.1" text-anchor="middle" class="zb on">All</text>
<text x="1554.6" y="381" class="fs" textLength="52" lengthAdjust="spacingAndGlyphs">FullScreen</text>
<path d="M1620.4 372H1632M1620.4 376.5H1632M1620.4 381H1632" stroke="#666" stroke-width="2.8" stroke-linecap="round"/>
</svg>

<div class="abs" style="left:1632.5px;top:758px;width:36px;height:36px;border-radius:50%;background:#fff;box-shadow:0 2px 10px rgba(0,0,0,.12)"></div>
<svg class="abs" style="left:1643px;top:768px" width="16" height="16" viewBox="0 0 16 16"><path d="M1.8 2.3H14" stroke="#444" stroke-width="1.3"/><path d="M7.9 5V13.6" stroke="#444" stroke-width="1.5"/><path d="M4.9 8.2L7.9 4.6L10.9 8.2Z" fill="#444"/></svg>
</div>
</body></html>
